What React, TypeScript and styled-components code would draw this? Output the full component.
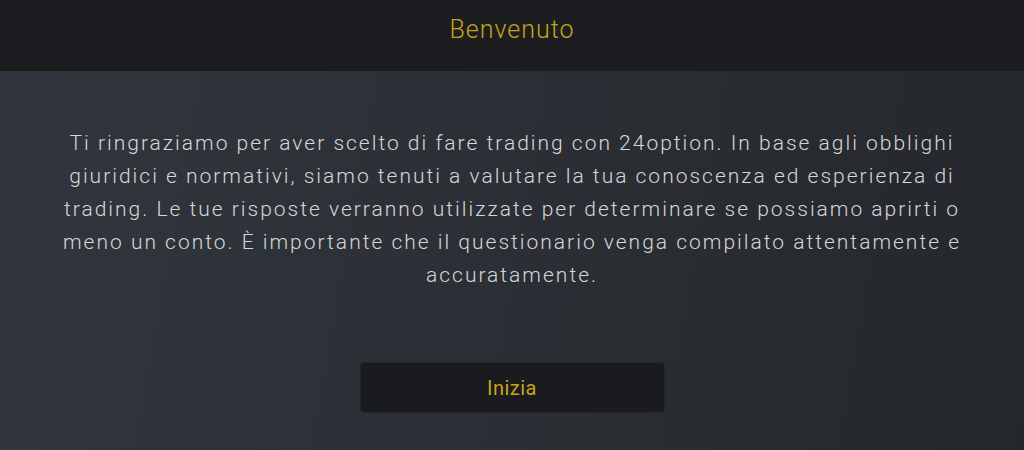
import React, { FC } from 'react';
import styled, { createGlobalStyle } from 'styled-components';

const GlobalStyle = createGlobalStyle`
  html, body {
    margin: 0;
    padding: 0;
    background: #2c3035;
  }
  body {
    font-family: Roboto, "Liberation Sans", sans-serif;
  }
`;

const Page = styled.div`
  width: 1024px;
  height: 450px;
  display: flex;
  flex-direction: column;
  overflow: hidden;
`;

const Header = styled.header`
  height: 71px;
  flex-shrink: 0;
  display: flex;
  align-items: center;
  justify-content: center;
  background: #1b1d20;
`;

const Title = styled.h1`
  margin: 0;
  padding-bottom: 12px;
  font-weight: 300;
  font-size: 25px;
  color: #c7a418;
  letter-spacing: 1px;
`;

const Body = styled.main`
  flex: 1;
  display: flex;
  flex-direction: column;
  align-items: center;
  padding-top: 56px;
  background: linear-gradient(100deg, #31353d 0%, #2c3036 45%, #24272b 100%);
`;

const Intro = styled.p`
  margin: 0;
  width: 900px;
  text-align: center;
  font-weight: 300;
  font-size: 21px;
  letter-spacing: 2px;
  line-height: 33px;
  color: #d6d7d8;
`;

const StartButton = styled.button`
  margin-top: 70px;
  width: 305px;
  height: 51px;
  border: 1px solid #24262a;
  border-radius: 4px;
  background: #1a1b1e;
  color: #c7a418;
  font-family: inherit;
  font-weight: 400;
  font-size: 20px;
  letter-spacing: 0.5px;
  cursor: pointer;
`;

const App: FC = () => (
  <>
    <GlobalStyle />
    <Page>
      <Header>
        <Title>Benvenuto</Title>
      </Header>
      <Body>
        <Intro>
          Ti ringraziamo per aver scelto di fare trading con 24option. In base agli obblighi
          giuridici e normativi, siamo tenuti a valutare la tua conoscenza ed esperienza di
          trading. Le tue risposte verranno utilizzate per determinare se possiamo aprirti o
          meno un conto. È importante che il questionario venga compilato attentamente e
          accuratamente.
        </Intro>
        <StartButton>Inizia</StartButton>
      </Body>
    </Page>
  </>
);

export default App;
